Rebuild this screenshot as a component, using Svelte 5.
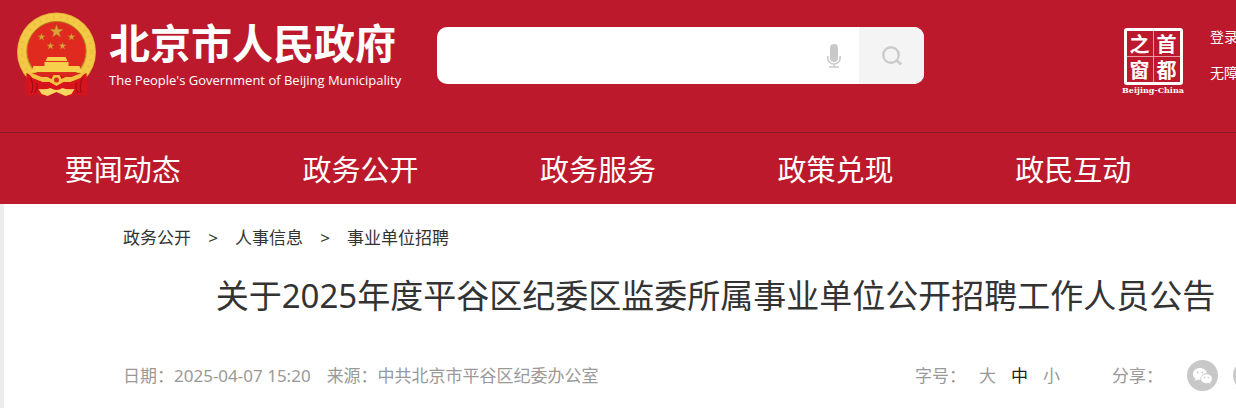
<script lang="ts">
  const sections = ['要闻动态', '政务公开', '政务服务', '政策兑现', '政民互动'];
  const sizes = ['大', '中', '小'];
  let size = $state('中');
  let query = $state('');
</script>

<div class="page">
  <header>
    <div class="top">
      <a class="brand" href="#home">
        <svg class="emblem" viewBox="0 0 80 86" aria-hidden="true">
          <defs>
            <path id="star" d="M0-7 1.7-2.2 6.8-2.2 2.7.9 4.2 5.8 0 2.8-4.2 5.8-2.7.9-6.8-2.2-1.7-2.2Z" />
          </defs>
          <circle cx="40" cy="40" r="39.5" fill="#e3b13a" />
          <circle cx="40" cy="40" r="34.500" fill="none" stroke="#f3c945" stroke-width="8" />
          <circle cx="40" cy="40" r="35" fill="none" stroke="#dfa62f" stroke-width="3" stroke-dasharray="2 5" opacity=".3" />
          <circle cx="40" cy="39" r="29.5" fill="#e02a20" stroke="#b17a1b" stroke-width="1" />
          <g fill="#dca137" stroke="#a86a20" stroke-width=".4">
            <use href="#star" transform="translate(40 19.500)" />
            <use href="#star" transform="translate(25 25) scale(.55)" />
            <use href="#star" transform="translate(55 25) scale(.55)" />
            <use href="#star" transform="translate(34 34) scale(.55)" />
            <use href="#star" transform="translate(46 34) scale(.55)" />
          </g>
          <path d="M31 45h18l2 4H29ZM28 50h24v4h3v3H25v-3h3ZM17 54h46l2 6H15Z" fill="#f8cf4c" />
          <path d="M15 61h50l-7 7H22Z" fill="#d72920" />
          <path d="M10 61 24 68 32 65 40 62 48 65 56 68 70 61 71 80 69 84 60 82 51 85 40 80 29 85 20 82 11 84 9 80Z" fill="#d7141c" />
          <path d="M14 66q4 7 1 15M20 71q2 5-2 10M66 66q-4 7-1 15M60 71q-2 5 2 10" fill="none" stroke="#9c0d17" stroke-width="1.2" />
          <path d="M10 59 25 65 31 65 35 67 37 63 43 63 45 67 49 65 55 65 70 59 64 66 54 70 47 70 40 74 33 70 26 70 16 66Z" fill="#f4c143" />
          <path d="M22 77q8 1 12-1 6 4 12 0 4 2 12 1l-3 5-6 2-9-4-9 4-6-2Z" fill="#f8d660" />
          <circle cx="40" cy="68" r="2.500" fill="#d72920" />
        </svg>
        <span class="names">
          <span class="name">北京市人民政府</span>
          <span class="english">The People's Government of Beijing Municipality</span>
        </span>
      </a>

      <form class="search" onsubmit={(e) => e.preventDefault()}>
        <input type="text" bind:value={query} aria-label="搜索" />
        <button class="mic" type="button" aria-label="语音">
          <svg width="14" height="24" viewBox="0 0 14 24">
            <rect x="3" y="0" width="8" height="18" rx="4" fill="#c9c9c9" />
            <path d="M.8 12v2a6.2 6 0 0 0 12.4 0v-2M7 20v3M2 23h10" fill="none" stroke="#c9c9c9" stroke-width="1.6" />
          </svg>
        </button>
        <button class="go" type="submit" aria-label="查找">
          <svg width="20" height="20" viewBox="0 0 20 20" fill="none" stroke="#cbcbcb" stroke-width="2.4">
            <circle cx="9" cy="9" r="7.8" />
            <path d="m14 14 5.2 4.5" stroke-width="2.8" />
          </svg>
        </button>
      </form>

      <a class="capital" href="#capital">
        <span class="seal"><span>之</span><span>首</span><span>窗</span><span>都</span></span>
        <span class="country">Beijing-China</span>
      </a>

      <div class="account">
        <a href="#login">登录</a>
        <a href="#access">无障碍</a>
      </div>
    </div>

    <nav>
      {#each sections as section}
        <a href="#section">{section}</a>
      {/each}
    </nav>
  </header>

  <main>
    <div class="crumbs">
      <a href="#open">政务公开</a><span>&gt;</span><a href="#staff">人事信息</a><span>&gt;</span><a href="#jobs">事业单位招聘</a>
    </div>
    <h1>关于2025年度平谷区纪委区监委所属事业单位公开招聘工作人员公告</h1>
    <div class="meta">
      <div class="facts">
        <span>日期：2025-04-07 15:20</span>
        <span>来源：中共北京市平谷区纪委办公室</span>
      </div>
      <div class="tools">
        <span class="label">字号：</span>
        <div class="sizes">
          {#each sizes as s}
            <button type="button" class:active={size === s} onclick={() => (size = s)}>{s}</button>
          {/each}
        </div>
        <span class="label share">分享：</span>
        <div class="icons">
          <button type="button" class="round" aria-label="微信">
            <svg width="31" height="31" viewBox="0 0 31 31">
              <path d="M13 8c-4 0-7 2.6-7 6 0 2 1 3.5 2.5 4.5L8 21l2.700-1.5 3 .4c-.6-4 2.3-6.6 6.3-6.6C19.5 10.2 16.5 8 13 8Z" fill="#fff" />
              <path d="M19.5 14c-3.300 0-5.800 2-5.800 4.700s2.500 4.700 5.800 4.700l2-.3 2.300 1.300-.5-2.200c1.200-.9 2-2.100 2-3.500 0-2.700-2.500-4.700-5.800-4.700Z" fill="#fff" stroke="#c8c8c8" stroke-width=".6" />
              <g fill="#c8c8c8"><circle cx="10.8" cy="12.5" r=".9" /><circle cx="15.3" cy="12.5" r=".9" /><circle cx="17.6" cy="17.5" r=".8" /><circle cx="21.4" cy="17.5" r=".8" /></g>
            </svg>
          </button>
          <button type="button" class="round" aria-label="微博"></button>
        </div>
      </div>
    </div>
  </main>
</div>

<style>
  :global(body) { margin: 0; background: #fff; }
  .page {
    overflow: hidden;
    font-family: "Noto Sans", "Noto Sans CJK SC", sans-serif;
    color: #333;
  }
  a { color: inherit; text-decoration: none; }
  button, input { font: inherit; color: inherit; border: 0; padding: 0; background: none; }
  header { background: #bc1a2c; color: #fff; }
  .top {
    display: flex;
    align-items: flex-start;
    height: 132px;
    border-bottom: 1px solid #8f1724;
    white-space: nowrap;
  }
  .brand { display: flex; gap: 12px; padding: 12px 0 0 16px; width: 421px; box-sizing: border-box; flex: none; }
  .emblem { width: 81px; height: 86px; flex: none; }
  .names { display: flex; flex-direction: column; padding-top: 4px; }
  .name { font-family: "Noto Sans CJK SC", sans-serif; font-size: 41px; line-height: 50px; font-weight: 700; }
  .english { font-family: "Open Sans", sans-serif; font-size: 13px; line-height: 28px; }
  .search {
    display: flex;
    flex: 1;
    margin: 27px 0 0 16px;
    height: 57px;
    border-radius: 10px;
    overflow: hidden;
    background: #fff;
  }
  .search input { flex: 1; min-width: 0; padding: 0 16px; font-size: 17px; color: #333; outline: 0; }
  .mic { width: 50px; display: grid; place-items: center; }
  .go { width: 65px; background: #f4f4f4; display: grid; place-items: center; }
  .capital { display: flex; flex-direction: column; align-items: center; width: 66px; flex: none; margin: 28px 0 0 196px; }
  .seal {
    display: grid;
    grid-template-columns: 1fr 1fr;
    gap: 1px;
    width: 53px;
    height: 51px;
    border: 3px solid #fff;
    border-radius: 3px;
    background: #e79aa3;
    font-family: "Noto Sans CJK SC", sans-serif;
    font-size: 20px;
    line-height: 25px;
    font-weight: 700;
    text-align: center;
  }
  .seal span { background: #bc1a2c; }
  .country { font-family: "DejaVu Serif", serif; font-size: 8px; line-height: 10px; font-weight: 700; }
  .account {
    display: flex;
    flex-direction: column;
    gap: 16px;
    width: 26px;
    margin: 27px 0 0 24px;
    font-size: 14px;
    line-height: 20px;
    flex: none;
  }
  nav { display: flex; height: 71px; padding-left: 4px; margin-right: 44px; }
  nav a { flex: 1; text-align: center; font-size: 29px; line-height: 74px; white-space: nowrap; }
  main { border-left: 4px solid #ededed; padding: 22px 0 18px 119px; }
  .crumbs { display: flex; font-size: 17px; line-height: 24px; }
  .crumbs span { width: 44px; text-align: center; }
  h1 {
    margin: 22px 12px 0 84px;
    text-align: center;
    font-size: 33px;
    line-height: 48px;
    font-weight: 400;
    white-space: nowrap;
  }
  .meta {
    display: flex;
    justify-content: space-between;
    align-items: center;
    margin: 40px -28px 0 0;
    font-size: 17px;
    line-height: 30px;
    color: #999;
    white-space: nowrap;
  }
  .facts { display: flex; gap: 16px; }
  .tools { display: flex; align-items: center; }
  .label { width: 64px; }
  .sizes { display: flex; gap: 15px; }
  .sizes .active { color: #222; }
  .share { margin-left: 52px; width: 75px; }
  .icons { display: flex; gap: 15px; }
  .round { width: 31px; height: 31px; border-radius: 50%; background: #c8c8c8; }
  .round svg { display: block; }
</style>
